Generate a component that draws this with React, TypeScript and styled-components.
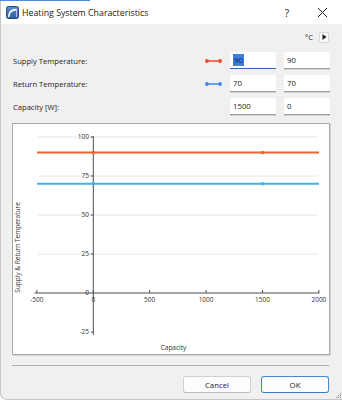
import styled, { createGlobalStyle } from "styled-components";

const GlobalStyle = createGlobalStyle`
  html, body { margin: 0; padding: 0; background: #ffffff; }
  body { font-family: "Open Sans", "Noto Sans", sans-serif; color: #1b1b1b; }
  * { box-sizing: border-box; }
`;

type Field = { label: string; legend?: string; a: string; b: string; focused?: boolean };

const fields: Field[] = [
    { label: "Supply Temperature:", legend: "#ef4a2b", a: "90", b: "90", focused: true },
    { label: "Return Temperature:", legend: "#3c88f2", a: "70", b: "70" },
    { label: "Capacity [W]:", a: "1500", b: "0" },
];

// chart scale, in page pixels
const sx = (c: number) => 93.3 + c * 0.1128;
const sy = (t: number) => 293 - t * 1.56;
const xTicks = [-500, 0, 500, 1000, 1500, 2000];
const yTicks = [100, 75, 50, 25, 0, -25];
const series = [
    { t: 90, color: "#f2632a" },
    { t: 70, color: "#3fb6e4" },
];

const App = () => {
    return (
        <>
            <GlobalStyle />
            <Screen>
                <TopEdge>
                    <Accent />
                </TopEdge>
                <Window>
                    <TitleBar>
                        <svg width="13" height="13" viewBox="0 0 13 13">
                            <defs>
                                <linearGradient id="ic" x1="0" y1="0" x2="0" y2="1">
                                    <stop offset="0" stopColor="#5b8fd0" />
                                    <stop offset="1" stopColor="#2d5c9e" />
                                </linearGradient>
                            </defs>
                            <rect x="0.5" y="0.5" width="12" height="12" rx="2" fill="url(#ic)" stroke="#234a80" />
                            <path d="M2.6 11 C3 6 6 3.4 10.6 3.6" fill="none" stroke="#ffffff" strokeWidth="1.6" />
                            <path d="M10.6 3.6 L10.6 11" fill="none" stroke="#cfe0f5" strokeWidth="0.8" />
                        </svg>
                        <TitleText>Heating System Characteristics</TitleText>
                        <HelpGlyph>?</HelpGlyph>
                        <CloseGlyph width="11" height="11" viewBox="0 0 11 11">
                            <path d="M1 1 L10 10 M10 1 L1 10" stroke="#1b1b1b" strokeWidth="1" />
                        </CloseGlyph>
                    </TitleBar>

                    <Body>
                        <UnitRow>
                            <UnitText>°C</UnitText>
                            <UnitButton>
                                <svg width="5" height="6" viewBox="0 0 5 6">
                                    <path d="M0.5 0 L4.5 3 L0.5 6 Z" fill="#1b1b1b" />
                                </svg>
                            </UnitButton>
                        </UnitRow>

                        <FieldGrid>
                            {fields.map((f) => (
                                <FieldRow key={f.label}>
                                    <Label>{f.label}</Label>
                                    <Legend>
                                        {f.legend && (
                                            <svg width="17" height="6" viewBox="0 0 17 6">
                                                <line x1="1.8" y1="3" x2="15.2" y2="3" stroke={f.legend} strokeWidth="1.5" />
                                                <circle cx="1.9" cy="3" r="1.9" fill={f.legend} />
                                                <circle cx="15.1" cy="3" r="1.9" fill={f.legend} />
                                            </svg>
                                        )}
                                    </Legend>
                                    <FieldBox $focused={f.focused}>
                                        {f.focused ? <Selected>{f.a}</Selected> : f.a}
                                    </FieldBox>
                                    <FieldBox>{f.b}</FieldBox>
                                </FieldRow>
                            ))}
                        </FieldGrid>

                        <ChartFrame>
                            <svg width="316" height="230" viewBox="13 124 316 230">
                                {yTicks
                                    .filter((t) => t > 0)
                                    .map((t) => (
                                        <line key={"g" + t} x1="38" x2="318" y1={sy(t)} y2={sy(t)} stroke="#e6e6e6" strokeWidth="1" />
                                    ))}

                                <line x1="34.5" x2={sx(2000) + 0.5} y1="293" y2="293" stroke="#4d4d4d" strokeWidth="1" />
                                {xTicks.map((c) => (
                                    <line key={"xt" + c} x1={sx(c)} x2={sx(c)} y1="290" y2="293" stroke="#4d4d4d" strokeWidth="1" />
                                ))}
                                <line x1={sx(0)} x2={sx(0)} y1="136" y2="335" stroke="#4d4d4d" strokeWidth="1" />
                                {yTicks
                                    .filter((t) => t !== 0)
                                    .map((t) => (
                                        <line key={"yt" + t} x1="90.8" x2={sx(0)} y1={sy(t)} y2={sy(t)} stroke="#4d4d4d" strokeWidth="1" />
                                    ))}

                                <g fontFamily='"Open Sans", "Noto Sans", sans-serif' fontSize="6.5" fill="#333333">
                                    {yTicks.map((t) => (
                                        <text key={"yl" + t} x="89" y={sy(t) + 2.3} textAnchor="end">
                                            {t}
                                        </text>
                                    ))}
                                    {xTicks.map((c) => (
                                        <text key={"xl" + c} x={sx(c)} y="302" textAnchor="middle">
                                            {c}
                                        </text>
                                    ))}
                                    <text x="173.5" y="349.5" textAnchor="middle">
                                        Capacity
                                    </text>
                                    <text x="19.5" y="247.5" textAnchor="middle" transform="rotate(-90 19.5 247.5)">
                                        Supply &amp; Return Temperature
                                    </text>
                                </g>

                                {series.map((s) => (
                                    <g key={s.t}>
                                        <line x1="37" x2="319" y1={sy(s.t)} y2={sy(s.t)} stroke={s.color} strokeWidth="2" />
                                        <rect x={sx(0) - 1.5} y={sy(s.t) - 1.5} width="3" height="3" fill={s.color} />
                                        <rect x={sx(1500) - 1.5} y={sy(s.t) - 1.5} width="3" height="3" fill={s.color} />
                                    </g>
                                ))}
                            </svg>
                        </ChartFrame>

                        <Separator />

                        <ButtonRow>
                            <Button>Cancel</Button>
                            <Button $primary>OK</Button>
                        </ButtonRow>
                    </Body>

                    <Grip width="7" height="7" viewBox="0 0 7 7">
                        {[
                            [5.5, 1.5],
                            [3.5, 3.5],
                            [5.5, 3.5],
                            [1.5, 5.5],
                            [3.5, 5.5],
                            [5.5, 5.5],
                        ].map(([x, y]) => (
                            <rect key={x + "-" + y} x={x - 0.6} y={y - 0.6} width="1.2" height="1.2" fill="#9a9a9a" />
                        ))}
                    </Grip>
                </Window>
            </Screen>
        </>
    );
};

const Screen = styled.div`
    width: 342px;
    height: 400px;
    display: flex;
    flex-direction: column;
    overflow: hidden;
`;

const TopEdge = styled.div`
    height: 1px;
    background: #ffffff;
    display: flex;
`;

const Accent = styled.div`
    width: 90px;
    background: #4a8fd8;
`;

const Window = styled.div`
    position: relative;
    flex: 1;
    display: flex;
    flex-direction: column;
    background: #f0f0f0;
    border-left: 1px solid #c6c6c6;
    border-bottom: 1px solid #c6c6c6;
    border-bottom-left-radius: 7px;
`;

const TitleBar = styled.div`
    height: 23px;
    background: #ffffff;
    display: flex;
    align-items: center;
    padding-left: 5px;
`;

const TitleText = styled.span`
    margin-left: 3px;
    font-size: 8.8px;
    color: #1b1b1b;
`;

const HelpGlyph = styled.span`
    margin-left: auto;
    font-size: 10px;
    color: #1b1b1b;
`;

const CloseGlyph = styled.svg`
    margin-left: 28px;
    margin-right: 14px;
`;

const Body = styled.div`
    display: flex;
    flex-direction: column;
    padding: 0 12px 0 11px;
`;

const UnitRow = styled.div`
    margin-top: 7px;
    height: 12px;
    display: flex;
    justify-content: flex-end;
    align-items: center;
    gap: 6px;
    padding-right: 1px;
`;

const UnitText = styled.span`
    font-size: 7.6px;
    color: #1b1b1b;
`;

const UnitButton = styled.div`
    width: 10px;
    height: 11px;
    display: flex;
    align-items: center;
    justify-content: center;
    background: #fbfbfb;
    border: 1px solid #d6d6d6;
    border-radius: 2px;
`;

const FieldGrid = styled.div`
    margin-top: 9px;
    display: flex;
    flex-direction: column;
    gap: 6px;
`;

const FieldRow = styled.div`
    display: grid;
    grid-template-columns: 1fr 17px 46px 46px;
    column-gap: 8px;
    height: 17px;
    align-items: center;
`;

const Label = styled.span`
    padding-left: 1px;
    font-size: 7.6px;
    color: #1b1b1b;
`;

const Legend = styled.div`
    height: 6px;
    display: flex;
`;

const FieldBox = styled.div<{ $focused?: boolean }>`
    height: 17px;
    display: flex;
    align-items: center;
    padding-left: 3px;
    background: #ffffff;
    border-radius: 2px 2px 0 0;
    font-size: 7.8px;
    color: #1b1b1b;
    border-bottom: ${(p) => (p.$focused ? "1.5px solid #2f66b8" : "1px solid #9c9c9c")};
    box-shadow: ${(p) => (p.$focused ? "none" : "0 1px 0 #d2d2d2")};
`;

const Selected = styled.span`
    background: #3b7fdc;
    color: #10284f;
    padding: 1px 1px;
    line-height: 10px;
`;

const ChartFrame = styled.div`
    margin-top: 8px;
    width: 318px;
    height: 232px;
    background: #ffffff;
    border: 1px solid #a9a9a9;
    box-shadow: 1px 1px 0 #d4d4d4;
    svg {
        display: block;
    }
`;

const Separator = styled.div`
    margin-top: 10px;
    height: 1px;
    background: #acacac;
    margin-right: 1px;
`;

const ButtonRow = styled.div`
    margin-top: 10px;
    display: flex;
    justify-content: flex-end;
    gap: 10px;
    padding-right: 1px;
`;

const Button = styled.div<{ $primary?: boolean }>`
    width: 68px;
    height: 17px;
    display: flex;
    align-items: center;
    justify-content: center;
    font-size: 7.8px;
    color: #1b1b1b;
    background: #fdfdfd;
    border-radius: 3px;
    border: 1px solid ${(p) => (p.$primary ? "#4a87d4" : "#d0d0d0")};
    border-bottom-color: ${(p) => (p.$primary ? "#3b78c8" : "#bcbcbc")};
`;

const Grip = styled.svg`
    position: absolute;
    right: 0;
    bottom: 0;
`;

export default App;
